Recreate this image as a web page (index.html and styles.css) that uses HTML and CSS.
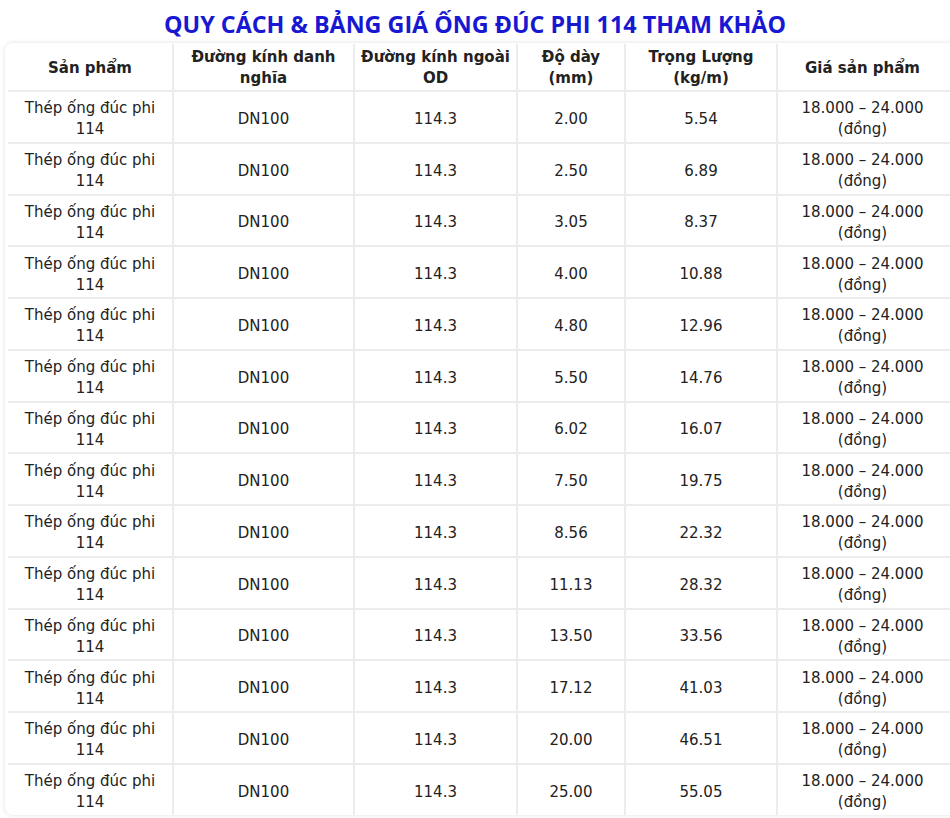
FILE: index.html
```html
<!DOCTYPE html>
<html lang="vi">
<head>
<meta charset="utf-8">
<link rel="stylesheet" href="styles.css">
</head>
<body>
<h2 class="title">QUY CÁCH &amp; BẢNG GIÁ ỐNG ĐÚC PHI 114 THAM KHẢO</h2>
<div class="card">
<table class="spec">
<colgroup>
<col class="c1"><col class="c2"><col class="c3"><col class="c4"><col class="c5"><col class="c6">
</colgroup>
<thead>
<tr><th>Sản phẩm</th><th>Đường kính danh<br>nghĩa</th><th>Đường kính ngoài<br>OD</th><th>Độ dày<br>(mm)</th><th>Trọng Lượng<br>(kg/m)</th><th>Giá sản phẩm</th></tr>
</thead>
<tbody>
<tr><td>Thép ống đúc phi<br>114</td><td>DN100</td><td>114.3</td><td>2.00</td><td>5.54</td><td>18.000 – 24.000<br>(đồng)</td></tr>
<tr><td>Thép ống đúc phi<br>114</td><td>DN100</td><td>114.3</td><td>2.50</td><td>6.89</td><td>18.000 – 24.000<br>(đồng)</td></tr>
<tr><td>Thép ống đúc phi<br>114</td><td>DN100</td><td>114.3</td><td>3.05</td><td>8.37</td><td>18.000 – 24.000<br>(đồng)</td></tr>
<tr><td>Thép ống đúc phi<br>114</td><td>DN100</td><td>114.3</td><td>4.00</td><td>10.88</td><td>18.000 – 24.000<br>(đồng)</td></tr>
<tr><td>Thép ống đúc phi<br>114</td><td>DN100</td><td>114.3</td><td>4.80</td><td>12.96</td><td>18.000 – 24.000<br>(đồng)</td></tr>
<tr><td>Thép ống đúc phi<br>114</td><td>DN100</td><td>114.3</td><td>5.50</td><td>14.76</td><td>18.000 – 24.000<br>(đồng)</td></tr>
<tr><td>Thép ống đúc phi<br>114</td><td>DN100</td><td>114.3</td><td>6.02</td><td>16.07</td><td>18.000 – 24.000<br>(đồng)</td></tr>
<tr><td>Thép ống đúc phi<br>114</td><td>DN100</td><td>114.3</td><td>7.50</td><td>19.75</td><td>18.000 – 24.000<br>(đồng)</td></tr>
<tr><td>Thép ống đúc phi<br>114</td><td>DN100</td><td>114.3</td><td>8.56</td><td>22.32</td><td>18.000 – 24.000<br>(đồng)</td></tr>
<tr><td>Thép ống đúc phi<br>114</td><td>DN100</td><td>114.3</td><td>11.13</td><td>28.32</td><td>18.000 – 24.000<br>(đồng)</td></tr>
<tr><td>Thép ống đúc phi<br>114</td><td>DN100</td><td>114.3</td><td>13.50</td><td>33.56</td><td>18.000 – 24.000<br>(đồng)</td></tr>
<tr><td>Thép ống đúc phi<br>114</td><td>DN100</td><td>114.3</td><td>17.12</td><td>41.03</td><td>18.000 – 24.000<br>(đồng)</td></tr>
<tr><td>Thép ống đúc phi<br>114</td><td>DN100</td><td>114.3</td><td>20.00</td><td>46.51</td><td>18.000 – 24.000<br>(đồng)</td></tr>
<tr><td>Thép ống đúc phi<br>114</td><td>DN100</td><td>114.3</td><td>25.00</td><td>55.05</td><td>18.000 – 24.000<br>(đồng)</td></tr>
</tbody>
</table>
</div>
</body>
</html>
```
FILE: styles.css
```css
html, body {
  margin: 0;
  padding: 0;
  background: #ffffff;
  overflow: hidden;
}
body {
  width: 950px;
  height: 818px;
}
.title {
  margin: 0;
  height: 43px;
  line-height: 49px;
  text-align: center;
  font-family: "Open Sans", "Noto Sans", sans-serif;
  font-weight: 700;
  font-size: 23.3px;
  color: #1818d2;
  letter-spacing: 0;
}
.card {
  margin-left: 5px;
  width: 980px;
  padding: 1px 0 0 3px;
  border-radius: 8px;
  box-shadow: 0 0 5px rgba(0, 0, 0, 0.12);
  background: #fff;
}
.spec {
  border-collapse: collapse;
  table-layout: fixed;
  width: 969px;
  font-family: "DejaVu Sans", sans-serif;
  font-size: 15px;
  color: #222;
}
.c1 { width: 165px; }
.c2 { width: 181px; }
.c3 { width: 163px; }
.c4 { width: 108px; }
.c5 { width: 152px; }
.c6 { width: 200px; }
.spec th,
.spec td {
  text-align: center;
  vertical-align: middle;
  padding: 0 6px;
  line-height: 21px;
  border: 2px solid #ececec;
}
.spec tr > :first-child { border-left: none; }
.spec tr > :last-child {
  border-right: none;
  padding-left: 0;
  padding-right: 30px;
}
.spec thead th {
  border-top: none;
  height: 44px;
  padding-top: 2px;
  font-weight: 700;
}
.spec tbody td {
  height: 44.75px;
  padding-top: 5px;
  padding-bottom: 0;
  font-weight: 400;
}
.spec tbody tr:last-child td { border-bottom: none; }
```
